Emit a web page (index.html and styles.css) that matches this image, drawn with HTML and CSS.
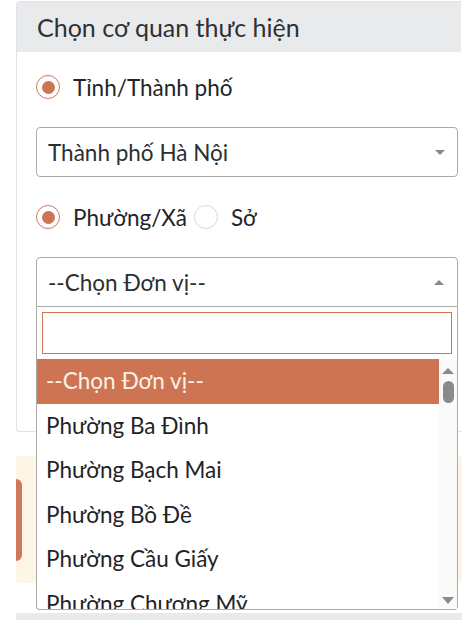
FILE: index.html
```html
<!DOCTYPE html>
<html lang="vi">
<head>
<meta charset="utf-8">
<link rel="stylesheet" href="styles.css">
</head>
<body>
<div class="page">
  <div class="card">
    <div class="card-header">Chọn cơ quan thực hiện</div>
    <div class="card-body">
      <div class="radio-row">
        <label class="radio"><span class="dot checked"></span><span class="lbl">Tỉnh/Thành phố</span></label>
      </div>
      <div class="select">
        <span class="sel-text">Thành phố Hà Nội</span>
        <span class="arrow down"></span>
      </div>
      <div class="radio-row">
        <label class="radio"><span class="dot checked"></span><span class="lbl">Phường/Xã</span></label>
        <label class="radio second"><span class="dot"></span><span class="lbl">Sở</span></label>
      </div>
      <div class="select-wrap">
        <div class="select open">
          <span class="sel-text">--Chọn Đơn vị--</span>
          <span class="arrow up"></span>
        </div>
        <div class="dropdown">
          <div class="search"><input class="search-input" type="text"></div>
          <div class="results">
            <ul class="options">
              <li class="option active">--Chọn Đơn vị--</li>
              <li class="option">Phường Ba Đình</li>
              <li class="option">Phường Bạch Mai</li>
              <li class="option">Phường Bồ Đề</li>
              <li class="option">Phường Cầu Giấy</li>
              <li class="option">Phường Chương Mỹ</li>
            </ul>
            <div class="scrollbar">
              <span class="sb-up"></span>
              <span class="sb-thumb"></span>
              <span class="sb-space"></span>
              <span class="sb-down"></span>
            </div>
          </div>
        </div>
      </div>
    </div>
  </div>
  <div class="notice"><span class="notice-bar"></span></div>
  <div class="next-card"></div>
</div>
</body>
</html>
```

FILE: styles.css
```css
html, body {
  margin: 0;
  padding: 0;
  background: #fff;
  overflow: hidden;
  height: 620px;
}
body {
  font-family: "Lato", "Open Sans", sans-serif;
  color: #212529;
}
.page {
  padding: 1px 0 0 16px;
}
.card {
  border: 1px solid #dfe2e6;
  border-right-color: transparent;
  border-radius: 4px 0 0 4px;
}
.card-header {
  background: #e9eaec;
  height: 50px;
  line-height: 50px;
  padding-left: 20px;
  font-size: 25px;
  color: #2d3236;
}
.card-body {
  padding: 20px 3px 124px 19px;
}
.radio-row {
  display: flex;
  align-items: center;
  height: 30px;
  gap: 7px;
}
.radio {
  display: flex;
  align-items: center;
}
.dot {
  width: 24px;
  height: 24px;
  border: 1px solid #d9d9d9;
  border-radius: 50%;
  box-sizing: border-box;
  display: flex;
  align-items: center;
  justify-content: center;
  flex: none;
}
.dot.checked {
  border-color: #cf7a58;
}
.dot.checked::after {
  content: "";
  width: 13px;
  height: 13px;
  border-radius: 50%;
  background: #cd7553;
}
.lbl {
  font-size: 22.5px;
  margin-left: 13px;
}
.select {
  margin-top: 25px;
  height: 50px;
  border: 1px solid #aaa;
  border-radius: 4px;
  box-sizing: border-box;
  display: flex;
  align-items: center;
  justify-content: space-between;
  padding: 0 12px 0 11px;
}
.sel-text {
  font-size: 22.5px;
  color: #2a2f33;
}
.arrow {
  width: 0;
  height: 0;
  border-left: 5px solid transparent;
  border-right: 5px solid transparent;
}
.arrow.down {
  border-top: 5px solid #888;
}
.arrow.up {
  border-bottom: 5px solid #888;
  margin-right: 1px;
}
.select + .radio-row {
  margin-top: 25px;
}
.select-wrap {
  position: relative;
}
.select-wrap .select {
  margin-top: 25px;
}
.select.open {
  border-radius: 4px 4px 0 0;
}
.dropdown {
  position: absolute;
  left: 0;
  right: 0;
  top: 100%;
  height: 303px;
  border: 1px solid #aaa;
  border-top: none;
  border-radius: 0 0 4px 4px;
  background: #fff;
  box-sizing: border-box;
  display: flex;
  flex-direction: column;
  z-index: 5;
}
.search {
  padding: 5px;
}
.search-input {
  display: block;
  width: 100%;
  height: 42px;
  box-sizing: border-box;
  border: 1px solid #cd7553;
  outline: none;
  margin: 0;
}
.results {
  flex: 1;
  display: flex;
  overflow: hidden;
  min-height: 0;
}
.options {
  list-style: none;
  margin: 0;
  padding: 0;
  flex: 1;
  overflow: hidden;
}
.option {
  height: 44.5px;
  line-height: 44px;
  padding-left: 9px;
  font-size: 22.5px;
  color: #1f2327;
  white-space: nowrap;
}
.option.active {
  background: #cd7553;
  color: #fdf1e8;
}
.scrollbar {
  width: 18px;
  background: #fafafa;
  display: flex;
  flex-direction: column;
  align-items: center;
  padding: 9px 0 5px;
  box-sizing: border-box;
}
.sb-up {
  width: 0;
  height: 0;
  border-left: 6px solid transparent;
  border-right: 6px solid transparent;
  border-bottom: 6px solid #8a8a8a;
}
.sb-thumb {
  margin-top: 7px;
  width: 11px;
  height: 22px;
  border-radius: 6px;
  background: #8a8a8a;
}
.sb-space { flex: 1; }
.sb-down {
  width: 0;
  height: 0;
  border-left: 6px solid transparent;
  border-right: 6px solid transparent;
  border-top: 7px solid #8a8a8a;
}
.notice {
  margin-top: 24px;
  height: 127px;
  background: #fdf5e6;
  display: flex;
  align-items: center;
  border-radius: 4px;
}
.notice-bar {
  width: 6px;
  height: 82px;
  background: #d1785a;
  border-radius: 0 6px 6px 0;
}
.next-card {
  margin-top: 30px;
  height: 20px;
  background: #e9eaec;
}
```
